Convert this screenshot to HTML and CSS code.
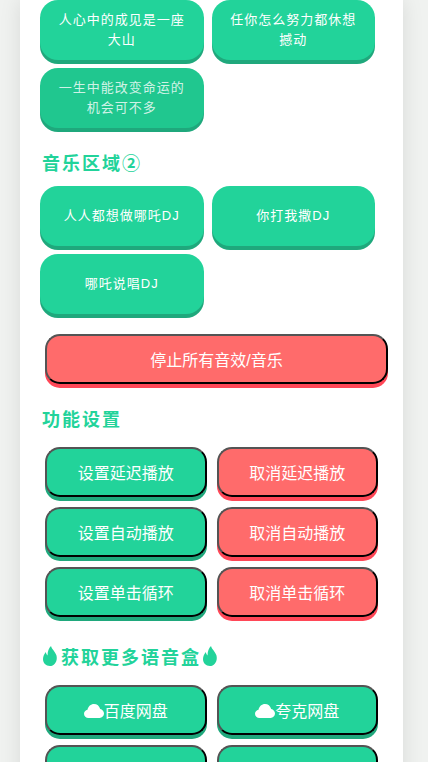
FILE: index.html
```html
<!DOCTYPE html>
<html lang="zh-CN">
<head>
    <meta charset="UTF-8">
    <meta name="viewport" content="width=device-width, initial-scale=1.0">
    <title>语音盒</title>
    <link rel="stylesheet" href="styles.css">
</head>
<body>
    <div class="card">
        <div class="sound-grid">
            <button class="sound-btn">人心中的成见是一座大山</button>
            <button class="sound-btn">任你怎么努力都休想撼动</button>
            <button class="sound-btn sound-btn-active">一生中能改变命运的机会可不多</button>
        </div>

        <h2 class="section-title title-music">音乐区域②</h2>
        <div class="sound-grid">
            <button class="sound-btn">人人都想做哪吒DJ</button>
            <button class="sound-btn">你打我撒DJ</button>
            <button class="sound-btn">哪吒说唱DJ</button>
        </div>

        <button class="ctrl-btn ctrl-red stop-btn">停止所有音效/音乐</button>

        <h2 class="section-title title-settings">功能设置</h2>
        <div class="ctrl-row">
            <button class="ctrl-btn ctrl-green">设置延迟播放</button>
            <button class="ctrl-btn ctrl-red">取消延迟播放</button>
        </div>
        <div class="ctrl-row">
            <button class="ctrl-btn ctrl-green">设置自动播放</button>
            <button class="ctrl-btn ctrl-red">取消自动播放</button>
        </div>
        <div class="ctrl-row">
            <button class="ctrl-btn ctrl-green">设置单击循环</button>
            <button class="ctrl-btn ctrl-red">取消单击循环</button>
        </div>

        <h2 class="section-title title-more">
            <svg class="flame" viewBox="0 0 14 20"><path d="M8 0c.6 3 4.200 5.600 5.400 9.200C15 14.800 11.400 20 7 20 2.800 20 0 16.800 0 13c0-3 1.500-5.200 2.800-7 .3 1.600.8 2.700 1.800 3.400C4.400 6 5.600 2.400 8 0z"/></svg>获取更多语音盒<svg class="flame" viewBox="0 0 14 20"><path d="M8 0c.6 3 4.200 5.600 5.400 9.200C15 14.800 11.400 20 7 20 2.800 20 0 16.800 0 13c0-3 1.500-5.200 2.800-7 .3 1.600.8 2.700 1.800 3.400C4.400 6 5.600 2.400 8 0z"/></svg>
        </h2>
        <div class="ctrl-row">
            <button class="ctrl-btn ctrl-green"><svg class="cloud" viewBox="0 0 20 14"><path d="M4.500 14C2 14 0 12.200 0 9.800 0 7.700 1.500 6 3.500 5.700 4.200 2.400 6.800 0 10 0c3 0 5.400 2 6.200 4.900C18.400 5.400 20 7.300 20 9.600 20 12 18.100 14 15.600 14z"/></svg>百度网盘</button>
            <button class="ctrl-btn ctrl-green"><svg class="cloud" viewBox="0 0 20 14"><path d="M4.500 14C2 14 0 12.200 0 9.800 0 7.700 1.500 6 3.500 5.700 4.200 2.400 6.800 0 10 0c3 0 5.400 2 6.200 4.900C18.400 5.400 20 7.300 20 9.600 20 12 18.100 14 15.600 14z"/></svg>夸克网盘</button>
        </div>
        <div class="ctrl-row">
            <button class="ctrl-btn ctrl-green"></button>
            <button class="ctrl-btn ctrl-green"></button>
        </div>
    </div>
</body>
</html>
```

FILE: styles.css
```css
html, body {
    height: 100%;
    overflow: hidden;
}
body {
    margin: 0;
    background-color: #f0f2f0;
    font-family: "Liberation Sans", "Noto Sans CJK SC", sans-serif;
}
.card {
    width: 343px;
    min-height: 100%;
    margin-left: 20px;
    padding: 0 20px;
    background-color: #fff;
    box-shadow: 0 0 20px rgba(0, 0, 0, 0.1);
}
.sound-grid {
    display: flex;
    flex-wrap: wrap;
    gap: 4px 8px;
}
.sound-btn {
    width: calc(50% - 8px);
    height: 60px;
    margin-bottom: 4px;
    padding: 0 15px;
    border: none;
    border-radius: 18px;
    background-color: #22d39a;
    box-shadow: 0 4px 0 #1fa87c;
    color: #fff;
    font-family: inherit;
    font-size: 13px;
    letter-spacing: 1px;
    line-height: 20px;
}
.sound-btn-active {
    background-color: #20c78f;
    color: rgba(255, 255, 255, 0.8);
}
.section-title {
    display: flex;
    align-items: center;
    height: 26px;
    margin: 0;
    color: #22d39a;
    font-size: 18px;
    font-weight: bold;
    letter-spacing: 2px;
    white-space: nowrap;
}
.title-music {
    margin: 17px 0 11px 2px;
}
.title-settings {
    margin: 21px 0 11px 2px;
}
.title-more {
    margin: 21px 0 11px 3px;
}
.ctrl-row {
    display: flex;
}
.ctrl-btn {
    flex: 1;
    height: 50px;
    margin: 5px;
    padding: 0;
    border: 2px outset #000;
    border-radius: 15px;
    color: #fff;
    font-family: inherit;
    font-size: 16px;
}
.ctrl-green {
    background-color: #22d39a;
    box-shadow: 0 4px 0 #1fa87c;
}
.ctrl-red {
    background-color: #ff6b6b;
    box-shadow: 0 4px 0 #ff4757;
}
.stop-btn {
    display: block;
    width: 100%;
    margin: 16px 5px 0;
}
.flame {
    width: 14px;
    height: 20px;
    margin-right: 4px;
    fill: #22d39a;
}
.flame:last-child {
    margin: 0 0 0 2px;
}
.cloud {
    width: 20px;
    height: 14px;
    fill: #fff;
    vertical-align: -1px;
}
```
